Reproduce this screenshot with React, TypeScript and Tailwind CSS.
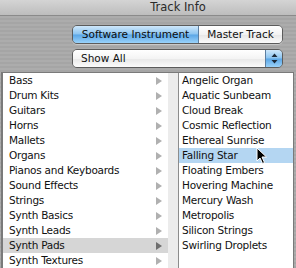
import React from 'react';

const categories = [
  'Bass',
  'Drum Kits',
  'Guitars',
  'Horns',
  'Mallets',
  'Organs',
  'Pianos and Keyboards',
  'Sound Effects',
  'Strings',
  'Synth Basics',
  'Synth Leads',
  'Synth Pads',
  'Synth Textures',
];

const patches = [
  'Angelic Organ',
  'Aquatic Sunbeam',
  'Cloud Break',
  'Cosmic Reflection',
  'Ethereal Sunrise',
  'Falling Star',
  'Floating Embers',
  'Hovering Machine',
  'Mercury Wash',
  'Metropolis',
  'Silicon Strings',
  'Swirling Droplets',
];

function Arrow({ dark }: { dark?: boolean }) {
  return (
    <svg width="6" height="8" viewBox="0 0 6 8" className="shrink-0">
      <path d="M0 0 L6 4 L0 8 Z" fill={dark ? '#6e6e6e' : '#b0b0b0'} />
    </svg>
  );
}

function Cursor() {
  return (
    <svg width="12" height="18" viewBox="0 0 12 18" className="absolute left-[256px] top-[147px]">
      <path d="M1 1 L1 14 L4 11 L6.5 16.5 L8.5 15.5 L6 10 L10.5 10 Z" fill="#000" stroke="#fff" strokeWidth="1" strokeLinejoin="round" />
    </svg>
  );
}

export default function App() {
  return (
    <div className="relative flex h-[268px] w-[296px] flex-col overflow-hidden bg-[repeating-linear-gradient(180deg,#acacac_0px,#acacac_2px,#a5a5a5_2px,#a5a5a5_4px)] font-['DejaVu_Sans',sans-serif] text-[10.5px] text-[#111]">
      {/* title bar */}
      <div className="flex h-[16px] shrink-0 items-center justify-center border-b border-[#8a8a8a] bg-[linear-gradient(180deg,#d4d4d4_0%,#bdbdbd_100%)] pl-[60px] text-[11.5px] text-[#2a2a2a]">
        Track Info
      </div>

      {/* controls */}
      <div className="flex flex-col items-end gap-[5px] pr-[13px] pt-[9px]">
        <div className="flex h-[19px] w-[211px] overflow-hidden rounded-[5px] border border-[#5c5c5c] shadow-[0_1px_0_rgba(255,255,255,0.35)]">
          <div className="flex w-[126px] items-center justify-center border-r border-[#5c7ea0] bg-[linear-gradient(180deg,#cfe8fb_0%,#8cc4f0_48%,#5aa6e6_52%,#9ad2fa_100%)] text-[#0c0c0c]">
            Software Instrument
          </div>
          <div className="flex flex-1 items-center justify-center bg-[linear-gradient(180deg,#ffffff_0%,#f2f2f2_50%,#e6e6e6_52%,#fbfbfb_100%)]">
            Master Track
          </div>
        </div>
        <div className="flex h-[19px] w-[211px] overflow-hidden rounded-[5px] border border-[#5c5c5c]">
          <div className="flex flex-1 items-center bg-[linear-gradient(180deg,#ffffff_0%,#f4f4f4_50%,#e8e8e8_52%,#fcfcfc_100%)] pl-[8px]">
            Show All
          </div>
          <div className="flex w-[17px] items-center justify-center border-l border-[#5c7ea0] bg-[linear-gradient(180deg,#cfe8fb_0%,#8cc4f0_48%,#5aa6e6_52%,#9ad2fa_100%)]">
            <svg width="7" height="11" viewBox="0 0 7 11">
              <path d="M3.5 0.5 L6.5 4 L0.5 4 Z M3.5 10.5 L6.5 7 L0.5 7 Z" fill="#1c2a3a" />
            </svg>
          </div>
        </div>
      </div>

      {/* column browser */}
      <div className="mt-[4px] ml-[1px] mr-[2px] flex flex-1 border-l-2 border-t border-r border-b-2 border-[#7a7a7a] bg-white tracking-[-0.25px]">
        <div className="flex w-[165px] flex-col">
          {categories.map((c) => {
            const sel = c === 'Synth Pads';
            return (
              <div
                key={c}
                className={`flex h-[15px] shrink-0 items-center justify-between pl-[6px] pr-[6px] ${sel ? 'bg-[#d6d6d6]' : ''}`}
              >
                <span>{c}</span>
                <Arrow dark={sel} />
              </div>
            );
          })}
        </div>
        <div className="w-[11px] border-r border-[#8c8c8c] bg-[#ececec]" />
        <div className="flex flex-1 flex-col">
          {patches.map((p) => (
            <div
              key={p}
              className={`flex h-[15px] shrink-0 items-center pl-[3px] ${p === 'Falling Star' ? 'bg-[#b4d6f2]' : ''}`}
            >
              {p}
            </div>
          ))}
        </div>
      </div>

      <Cursor />
    </div>
  );
}
